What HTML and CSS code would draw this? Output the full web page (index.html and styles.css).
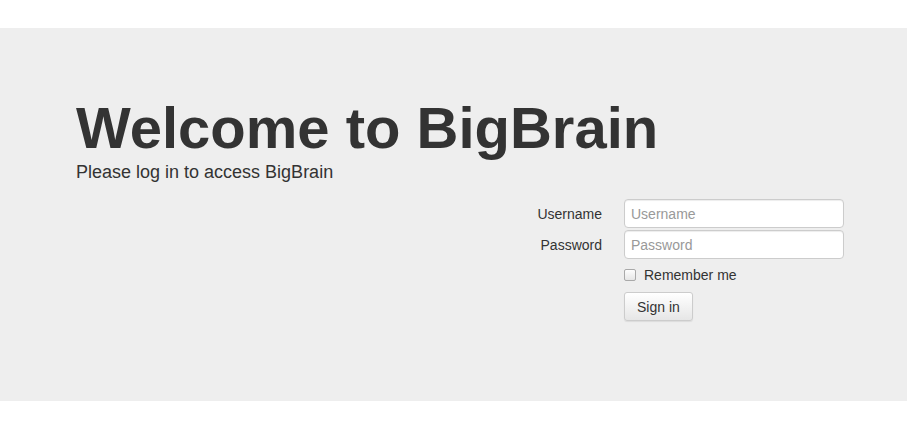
FILE: index.html
```html
<!DOCTYPE html>
<html lang="en">
<head>
<meta charset="utf-8">
<title>BigBrain</title>
<link rel="stylesheet" href="styles.css">
</head>
<body>
<div class="topbar"></div>
<div class="jumbotron">
  <div class="container">
    <h1 class="title">Welcome to BigBrain</h1>
    <p class="lead">Please log in to access BigBrain</p>
    <form class="login">
      <label class="field-label" for="username">Username</label>
      <input class="field-input" id="username" type="text" placeholder="Username">
      <label class="field-label" for="password">Password</label>
      <input class="field-input" id="password" type="password" placeholder="Password">
      <div class="field-offset">
        <label class="remember"><span class="checkbox"></span>Remember me</label>
      </div>
      <div class="field-offset">
        <button class="btn" type="button">Sign in</button>
      </div>
    </form>
  </div>
</div>
</body>
</html>
```
FILE: styles.css
```css
* { box-sizing: border-box; }
html, body { margin: 0; padding: 0; background: #fff; }
body {
  font-family: "Liberation Sans", Arial, sans-serif;
  font-size: 14px;
  color: #333;
}
.topbar { height: 28px; background: #fff; }
.jumbotron {
  background: #eeeeee;
  height: 373px;
  padding-top: 68px;
}
.container {
  padding-left: 76px;
  padding-right: 63px;
  display: flex;
  flex-direction: column;
}
.title {
  margin: 0;
  font-size: 58px;
  line-height: 63px;
  font-weight: 700;
  color: #333;
}
.lead {
  margin: 0;
  font-size: 18px;
  line-height: 26px;
  color: #333;
}
.login {
  align-self: flex-end;
  margin-top: 14px;
  display: grid;
  grid-template-columns: auto 220px;
  column-gap: 20px;
  row-gap: 2px;
  align-items: center;
}
.field-label {
  text-align: right;
  font-size: 14px;
  margin-right: 2px;
  color: #333;
}
.field-input {
  height: 29px;
  width: 220px;
  margin: 0;
  padding: 4px 6px;
  font-family: "Liberation Sans", Arial, sans-serif;
  font-size: 14px;
  color: #333;
  background: #fff;
  border: 1px solid #cccccc;
  border-radius: 4px;
  box-shadow: inset 0 1px 1px rgba(0,0,0,0.075);
  outline: none;
}
.field-input::placeholder { color: #999; }
.field-offset { grid-column: 2; }
.remember {
  display: flex;
  align-items: center;
  height: 28px;
  font-size: 14px;
  color: #333;
}
.checkbox {
  width: 12px;
  height: 12px;
  margin-right: 8px;
  border: 1px solid #a9a9a9;
  border-radius: 2px;
  background: linear-gradient(#fdfdfd, #e6e6e6);
}
.btn {
  margin-top: 1px;
  height: 29px;
  padding: 0 12px;
  font-family: "Liberation Sans", Arial, sans-serif;
  font-size: 14px;
  color: #333;
  border: 1px solid #cccccc;
  border-radius: 3px;
  background: linear-gradient(#ffffff, #e6e6e6);
  box-shadow: 0 1px 1px rgba(0,0,0,0.08);
}
```
